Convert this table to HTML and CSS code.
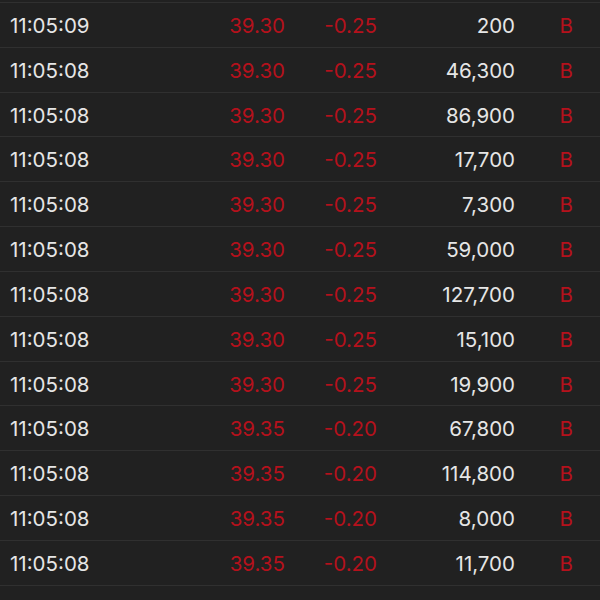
FILE: index.html
```html
<!DOCTYPE html>
<html>
<head>
<meta charset="utf-8">
<link rel="stylesheet" href="styles.css">
</head>
<body>
<div class="list">
  <div class="row"><span class="t">11:05:09</span><span class="p">39.30</span><span class="c">-0.25</span><span class="v">200</span><span class="s">B</span></div>
  <div class="row"><span class="t">11:05:08</span><span class="p">39.30</span><span class="c">-0.25</span><span class="v">46,300</span><span class="s">B</span></div>
  <div class="row"><span class="t">11:05:08</span><span class="p">39.30</span><span class="c">-0.25</span><span class="v">86,900</span><span class="s">B</span></div>
  <div class="row"><span class="t">11:05:08</span><span class="p">39.30</span><span class="c">-0.25</span><span class="v">17,700</span><span class="s">B</span></div>
  <div class="row"><span class="t">11:05:08</span><span class="p">39.30</span><span class="c">-0.25</span><span class="v">7,300</span><span class="s">B</span></div>
  <div class="row"><span class="t">11:05:08</span><span class="p">39.30</span><span class="c">-0.25</span><span class="v">59,000</span><span class="s">B</span></div>
  <div class="row"><span class="t">11:05:08</span><span class="p">39.30</span><span class="c">-0.25</span><span class="v">127,700</span><span class="s">B</span></div>
  <div class="row"><span class="t">11:05:08</span><span class="p">39.30</span><span class="c">-0.25</span><span class="v">15,100</span><span class="s">B</span></div>
  <div class="row"><span class="t">11:05:08</span><span class="p">39.30</span><span class="c">-0.25</span><span class="v">19,900</span><span class="s">B</span></div>
  <div class="row"><span class="t">11:05:08</span><span class="p">39.35</span><span class="c">-0.20</span><span class="v">67,800</span><span class="s">B</span></div>
  <div class="row"><span class="t">11:05:08</span><span class="p">39.35</span><span class="c">-0.20</span><span class="v">114,800</span><span class="s">B</span></div>
  <div class="row"><span class="t">11:05:08</span><span class="p">39.35</span><span class="c">-0.20</span><span class="v">8,000</span><span class="s">B</span></div>
  <div class="row"><span class="t">11:05:08</span><span class="p">39.35</span><span class="c">-0.20</span><span class="v">11,700</span><span class="s">B</span></div>
  <div class="row"><span class="t">11:05:08</span><span class="p">39.35</span><span class="c">-0.20</span><span class="v">72,000</span><span class="s">B</span></div>
</div>
</body>
</html>
```
FILE: styles.css
```css
html, body {
  margin: 0;
  padding: 0;
  background: #212121;
  overflow: hidden;
}
.list {
  margin-top: 2px;
  border-top: 1px solid #303030;
  font-family: Inter, "Noto Sans", sans-serif;
  font-size: 20.5px;
}
.row {
  box-sizing: border-box;
  display: grid;
  grid-template-columns: 180px 95px 92px 138px 1fr;
  align-items: center;
  height: 44.83px;
  padding-top: 1px;
  padding-left: 10px;
  padding-right: 27px;
  border-bottom: 1px solid #303030;
}
.t { color: #e6e6e6; }
.p, .c, .s { color: #b5111c; }
.p, .c, .v, .s { text-align: right; }
.v { color: #e6e6e6; }
```
